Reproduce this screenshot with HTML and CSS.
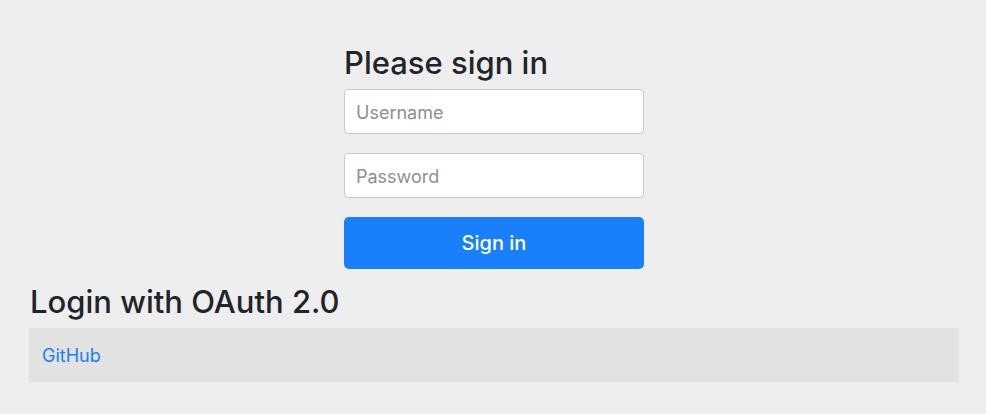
FILE: index.html
```html
<!DOCTYPE html>
<html lang="en">
<head>
    <meta charset="UTF-8">
    <meta name="viewport" content="width=device-width, initial-scale=1.0">
    <title>Please sign in</title>
    <link rel="stylesheet" href="styles.css">
</head>
<body>

<div class="container">
    <!-- Username / password form -->
    <form class="form-signin" method="post" action="/login">
        <h2 class="form-signin-heading">Please sign in</h2>
        <p class="field">
            <input type="text" id="username" name="username" class="form-control" placeholder="Username">
        </p>
        <p class="field">
            <input type="password" id="password" name="password" class="form-control" placeholder="Password">
        </p>
        <button class="btn-primary" type="submit">Sign in</button>
    </form>

    <!-- OAuth providers -->
    <h2 class="oauth-heading">Login with OAuth 2.0</h2>
    <table class="providers">
        <tr><td><a href="/oauth2/authorization/github">GitHub</a></td></tr>
    </table>
</div>

</body>
</html>
```

FILE: styles.css
```css
body {
    font-family: Inter, "Noto Sans", sans-serif;
    background-color: #eee;
    color: #212529;
    margin: 0;
    padding: 0 0 0 2px;
}
.container {
    max-width: 930px;
    margin: 0 auto;
}
.form-signin {
    max-width: 300px;
    margin: 0 auto;
    padding-top: 44px;
}
h2 {
    font-size: 31px;
    font-weight: 500;
    line-height: 38px;
    margin: 0;
}
.form-signin-heading {
    margin-bottom: 7px;
}
.field {
    margin: 0 0 19px;
}
.form-control {
    display: block;
    width: 100%;
    height: 45px;
    box-sizing: border-box;
    padding: 2px 11px 0;
    font-family: inherit;
    font-size: 18px;
    color: #495057;
    background: #fff;
    border: 1px solid #c8c8c8;
    border-radius: 4px;
    outline: none;
}
.form-control::placeholder {
    color: #8a9096;
}
.btn-primary {
    display: block;
    width: 100%;
    height: 52px;
    font-family: inherit;
    font-size: 20px;
    font-weight: 500;
    color: #fff;
    background-color: #1a7ffb;
    border: none;
    border-radius: 5px;
    cursor: pointer;
}
.oauth-heading {
    margin: 14px 0 7px 1px;
}
.providers {
    width: 100%;
    border-collapse: collapse;
}
.providers td {
    height: 53px;
    padding: 0 13px;
    background-color: #e2e2e2;
    border-top: 1px solid #dfe3e6;
    font-size: 18px;
}
.providers a {
    color: #1a7ffb;
    text-decoration: none;
}
```
